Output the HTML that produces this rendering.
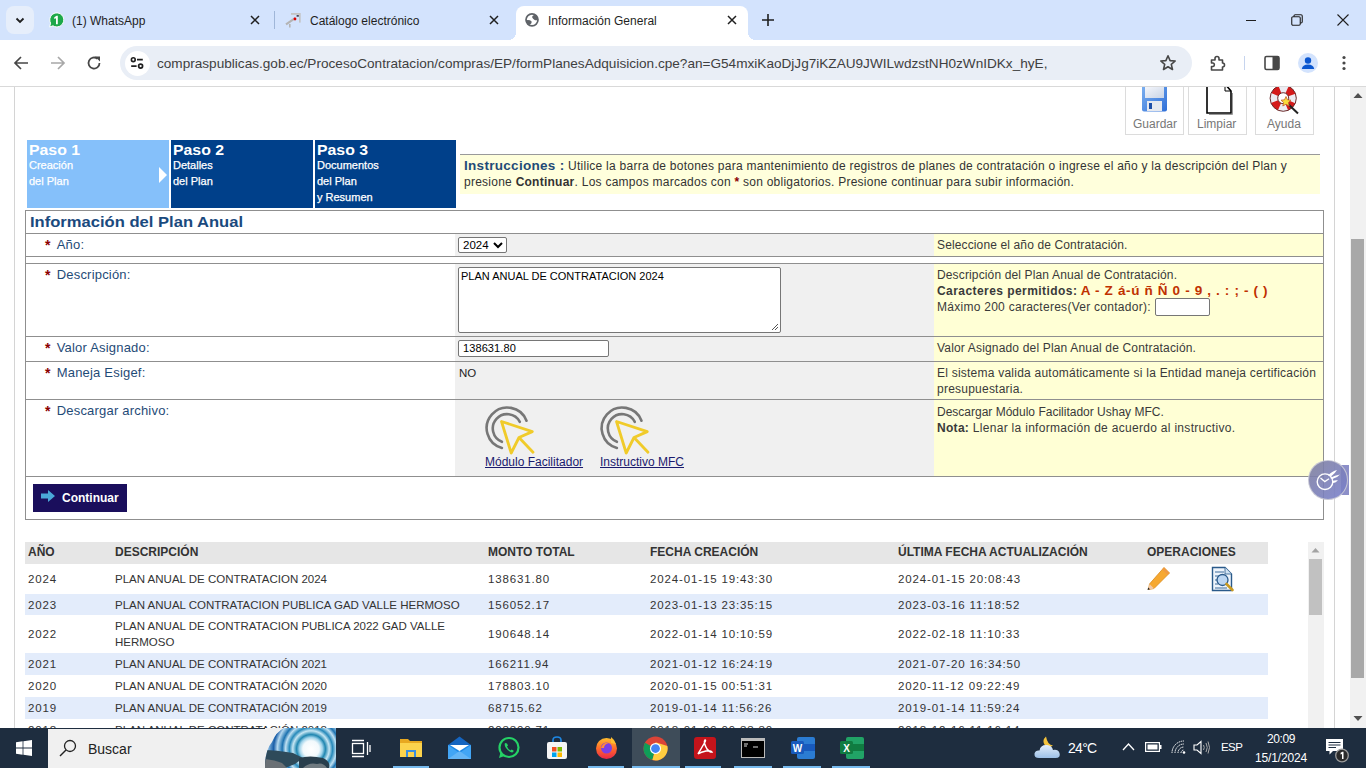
<!DOCTYPE html>
<html><head><meta charset="utf-8">
<style>
*{margin:0;padding:0;box-sizing:border-box}
html,body{width:1366px;height:768px;overflow:hidden;background:#fff;font-family:"Liberation Sans",sans-serif;position:relative}
.a{position:absolute}
.t{position:absolute;white-space:nowrap;line-height:1}
/* chrome */
#tabs{left:0;top:0;width:1366px;height:40px;background:#d3e3fd}
#toolbar{left:0;top:40px;width:1366px;height:46px;background:#fff;border-bottom:1px solid #d7d7d7}
#omni{left:120px;top:46px;width:1072px;height:34px;border-radius:17px;background:#e9eef6}
/* page */
#page{left:0;top:87px;width:1350px;height:641px;background:#fff;overflow:hidden}
.lbl{color:#1f4b77;font-size:13px;letter-spacing:0.2px}
.lbl .ast{position:absolute;left:0;top:0;font-weight:bold;font-size:14px}
.lbl i{font-style:normal;position:absolute;left:11.7px;top:0}
.ast{color:#8b0000}
.help{color:#3a3a3a;font-size:12px}
.th{font-size:12px;font-weight:bold;color:#333}
.td{font-size:11.5px;color:#333}
.num{letter-spacing:0.86px}
/* taskbar */
#taskbar{left:0;top:728px;width:1366px;height:40px;background:#1e2a38}
</style></head><body>
<!-- TAB STRIP -->
<div class="a" style="left:0;top:0;width:1366px;height:40px;background:#d3e3fd"></div>
<div class="a" style="left:6px;top:6px;width:28px;height:28px;border-radius:8px;background:#e6eefb"></div>
<svg class="a" style="left:13px;top:13px" width="14" height="14" viewBox="0 0 14 14"><path d="M3.5 5.5 L7 9 L10.5 5.5" fill="none" stroke="#1f1f1f" stroke-width="1.8"/></svg>
<!-- whatsapp tab -->
<svg class="a" style="left:48px;top:12px" width="16" height="16" viewBox="0 0 16 16"><path d="M1.6 15 L2.6 11.2 A7 7 0 1 1 5 13.8z" fill="#1ca84a" stroke="#fff" stroke-width="1"/><path d="M6.3 5.2 L8.6 3.8 H9.8 V12.2 H8 V6.2 L6.3 7.1z" fill="#fff"/></svg>
<div class="t" style="left:72px;top:15px;font-size:12px;color:#1f1f1f">(1) WhatsApp</div>
<svg class="a" style="left:250px;top:15px" width="10" height="10" viewBox="0 0 10 10"><path d="M1 1L9 9M9 1L1 9" stroke="#1f1f1f" stroke-width="1.5"/></svg>
<div class="a" style="left:274px;top:11px;width:1px;height:18px;background:#9fb6d8"></div>
<!-- catalogo tab -->
<svg class="a" style="left:284px;top:11px" width="18" height="18" viewBox="0 0 18 18"><rect x="7" y="2" width="8.6" height="1.8" fill="#c4c4c4"/><rect x="15" y="2" width="1.7" height="9.6" fill="#c4c4c4"/><path d="M2 13.3 L11.2 7.2" stroke="#b4b4b4" stroke-width="2.2"/><rect x="5" y="13" width="1.6" height="3.5" fill="#b4b4b4"/><circle cx="11" cy="8" r="1.4" fill="#d00"/><rect x="12.6" y="4.2" width="2.2" height="1.4" fill="#223"/></svg>
<div class="t" style="left:310px;top:15px;font-size:12px;color:#1f1f1f">Catálogo electrónico</div>
<svg class="a" style="left:489px;top:15px" width="10" height="10" viewBox="0 0 10 10"><path d="M1 1L9 9M9 1L1 9" stroke="#1f1f1f" stroke-width="1.5"/></svg>
<!-- active tab -->
<div class="a" style="left:516px;top:6px;width:232px;height:36px;background:#fff;border-radius:8px 8px 0 0"></div>
<div class="a" style="left:508px;top:32px;width:8px;height:8px;background:radial-gradient(circle at 0 0,#d3e3fd 8px,#fff 8px)"></div>
<div class="a" style="left:748px;top:32px;width:8px;height:8px;background:radial-gradient(circle at 8px 0,#d3e3fd 8px,#fff 8px)"></div>
<svg class="a" style="left:524px;top:12px" width="16" height="16" viewBox="0 0 16 16"><circle cx="8" cy="7.8" r="6" fill="#fff" stroke="#5f6368" stroke-width="1.7"/><path d="M8 5 Q8.5 3 11 2.8 Q13.8 4.5 13.6 8 Q11.5 8.8 10.3 7.8 Q9 7 8 5z" fill="#5f6368"/><path d="M1.8 8.3 Q4 7.8 6 8.3 Q8.5 9.5 7.5 11 Q6.5 12.5 5.5 13 Q2.5 11.5 1.8 8.3z" fill="#5f6368"/></svg>
<div class="t" style="left:548px;top:15px;font-size:12px;color:#1f1f1f">Información General</div>
<svg class="a" style="left:727px;top:15px" width="10" height="10" viewBox="0 0 10 10"><path d="M1 1L9 9M9 1L1 9" stroke="#1f1f1f" stroke-width="1.5"/></svg>
<svg class="a" style="left:761px;top:13px" width="14" height="14" viewBox="0 0 14 14"><path d="M7 1V13M1 7H13" stroke="#1f1f1f" stroke-width="1.6"/></svg>
<!-- window controls -->
<div class="a" style="left:1246px;top:20px;width:10px;height:1px;background:#1f1f1f"></div>
<svg class="a" style="left:1291px;top:14px" width="12" height="12" viewBox="0 0 12 12"><rect x="0.75" y="2.75" width="8.5" height="8.5" rx="1.2" fill="none" stroke="#1f1f1f" stroke-width="1.1"/><path d="M3 2.75 V2 Q3 0.75 4.2 0.75 H10 Q11.25 0.75 11.25 2 V7.8 Q11.25 9 10 9 H9.25" fill="none" stroke="#1f1f1f" stroke-width="1.1"/></svg>
<svg class="a" style="left:1337px;top:14px" width="12" height="12" viewBox="0 0 12 12"><path d="M0.5 0.5L11.5 11.5M11.5 0.5L0.5 11.5" stroke="#1f1f1f" stroke-width="1.1"/></svg>
<!-- TOOLBAR -->
<div class="a" style="left:0;top:40px;width:1366px;height:46px;background:#fff;border-radius:8px 8px 0 0"></div>
<div class="a" style="left:0;top:86px;width:1366px;height:1px;background:#d9d9d9"></div>
<svg class="a" style="left:13px;top:55px" width="16" height="16" viewBox="0 0 16 16"><path d="M15 8H2M8 2L2 8L8 14" fill="none" stroke="#474747" stroke-width="1.7"/></svg>
<svg class="a" style="left:50px;top:55px" width="16" height="16" viewBox="0 0 16 16"><path d="M1 8H14M8 2L14 8L8 14" fill="none" stroke="#a8a8a8" stroke-width="1.7"/></svg>
<svg class="a" style="left:86px;top:55px" width="16" height="16" viewBox="0 0 16 16"><path d="M13.5 8 A5.5 5.5 0 1 1 11.5 3.8" fill="none" stroke="#474747" stroke-width="1.8"/><path d="M9 1.5 H14 V6.5z" fill="#474747"/></svg>
<div class="a" style="left:120px;top:46px;width:1072px;height:34px;border-radius:17px;background:#e9eef6"></div>
<div class="a" style="left:125px;top:51px;width:25px;height:25px;border-radius:13px;background:#fff"></div>
<svg class="a" style="left:129px;top:55px" width="16" height="16" viewBox="0 0 16 16"><circle cx="4.3" cy="4.7" r="1.9" fill="none" stroke="#1f1f1f" stroke-width="1.6"/><path d="M8 4.7H13.8M2.2 11.1H7.6" stroke="#1f1f1f" stroke-width="1.7"/><circle cx="11.6" cy="11.1" r="2" fill="none" stroke="#1f1f1f" stroke-width="1.7"/></svg>
<div class="t" style="left:157px;top:57px;font-size:13.6px;color:#404040;letter-spacing:0px">compraspublicas.gob.ec/ProcesoContratacion/compras/EP/formPlanesAdquisicion.cpe?an=G54mxiKaoDjJg7iKZAU9JWILwdzstNH0zWnIDKx_hyE,</div>
<svg class="a" style="left:1159px;top:54px" width="18" height="18" viewBox="0 0 18 18"><path d="M9 1.8 L11.1 6.6 L16.2 7 L12.3 10.4 L13.5 15.5 L9 12.8 L4.5 15.5 L5.7 10.4 L1.8 7 L6.9 6.6z" fill="none" stroke="#474747" stroke-width="1.6" stroke-linejoin="round"/></svg>
<svg class="a" style="left:1209px;top:54px" width="18" height="18" viewBox="0 0 18 18"><path d="M2.5 6 H6 V4.5 A2 2 0 0 1 10 4.5 V6 H13.5 V9 A2 2 0 0 1 13.5 13 V16 H2.5 V12.5 H4 A1.8 1.8 0 0 0 4 9 H2.5z" fill="none" stroke="#474747" stroke-width="1.6" stroke-linejoin="round"/></svg>
<div class="a" style="left:1244px;top:56px;width:1px;height:14px;background:#c6d4ee"></div>
<svg class="a" style="left:1264px;top:55px" width="16" height="16" viewBox="0 0 16 16"><rect x="1" y="1.5" width="14" height="13" rx="1.5" fill="none" stroke="#474747" stroke-width="1.6"/><rect x="8.5" y="1.5" width="6.5" height="13" fill="#474747"/></svg>
<div class="a" style="left:1298px;top:53px;width:20px;height:20px;border-radius:10px;background:#d3e3fd"></div>
<svg class="a" style="left:1298px;top:53px" width="20" height="20" viewBox="0 0 20 20"><circle cx="10" cy="7.5" r="3.2" fill="#0b57d0"/><path d="M3.8 16 Q4.5 11.5 10 11.5 Q15.5 11.5 16.2 16z" fill="#0b57d0"/></svg>
<svg class="a" style="left:1342px;top:55px" width="4" height="16" viewBox="0 0 4 16"><circle cx="2" cy="2.5" r="1.6" fill="#474747"/><circle cx="2" cy="8" r="1.6" fill="#474747"/><circle cx="2" cy="13.5" r="1.6" fill="#474747"/></svg>
<div class="a" style="left:0;top:87px;width:1366px;height:641px;overflow:hidden"><div class="a" style="left:0;top:-87px;width:1366px;height:768px">
<!-- PAGE -->
<div class="a" style="left:14px;top:87px;width:1px;height:641px;background:#d4d4d4"></div>
<div class="a" style="left:1334px;top:87px;width:1px;height:641px;background:#d4d4d4"></div>
<!-- toolbar buttons -->
<div class="a" style="left:1125px;top:80px;width:59px;height:55px;border:1px solid #dcdcdc"></div>
<div class="a" style="left:1188px;top:80px;width:59px;height:55px;border:1px solid #dcdcdc"></div>
<div class="a" style="left:1255px;top:80px;width:59px;height:55px;border:1px solid #dcdcdc"></div>
<div class="t" style="left:1133px;top:118px;font-size:12px;color:#777">Guardar</div>
<div class="t" style="left:1197px;top:118px;font-size:12px;color:#777">Limpiar</div>
<div class="t" style="left:1267px;top:118px;font-size:12px;color:#777">Ayuda</div>
<!-- steps -->
<div class="a" style="left:27px;top:140px;width:142px;height:68px;background:#85c0fa"></div>
<div class="a" style="left:171px;top:140px;width:142px;height:68px;background:#00408a"></div>
<div class="a" style="left:315px;top:140px;width:141px;height:68px;background:#00408a"></div>
<svg class="a" style="left:158px;top:167px" width="10" height="16" viewBox="0 0 10 16"><path d="M1 0L9 8L1 16z" fill="#fff"/></svg>
<div class="t" style="left:29px;top:143px;font-size:14px;font-weight:bold;color:#fff;transform:scaleX(1.13);transform-origin:0 0">Paso 1</div>
<div class="t" style="left:29px;top:157px;font-size:11px;color:#fff;line-height:16px;white-space:normal;width:130px;-webkit-text-stroke:0.25px #fff">Creación<br>del Plan</div>
<div class="t" style="left:173px;top:143px;font-size:14px;font-weight:bold;color:#fff;transform:scaleX(1.13);transform-origin:0 0">Paso 2</div>
<div class="t" style="left:173px;top:157px;font-size:11px;color:#fff;line-height:16px;white-space:normal;width:130px;-webkit-text-stroke:0.25px #fff">Detalles<br>del Plan</div>
<div class="t" style="left:317px;top:143px;font-size:14px;font-weight:bold;color:#fff;transform:scaleX(1.13);transform-origin:0 0">Paso 3</div>
<div class="t" style="left:317px;top:157px;font-size:11px;color:#fff;line-height:16px;white-space:normal;width:130px;-webkit-text-stroke:0.25px #fff">Documentos<br>del Plan<br>y Resumen</div>
<!-- instructions -->
<div class="a" style="left:460px;top:154px;width:860px;height:40px;background:#ffffdc;border-top:1px solid #9a9a9a"></div>
<div class="t" style="left:464px;top:158px;font-size:12px;color:#333;line-height:16px;letter-spacing:0.25px">
<b style="color:#1f4b77;font-size:13.5px;letter-spacing:0.3px">Instrucciones :</b> Utilice la barra de botones para mantenimiento de registros de planes de contratación o ingrese el año y la descripción del Plan y<br>presione <b>Continuar</b>. Los campos marcados con <b style="color:#8b0000">*</b> son obligatorios. Presione continuar para subir información.</div>

<!-- FORM -->
<div class="a" style="left:25px;top:210px;width:1299px;height:310px;border:1px solid #8f8f8f"></div>
<div class="t" style="left:30px;top:215px;font-size:14.5px;font-weight:bold;color:#1a4a7e;transform:scaleX(1.143);transform-origin:0 0">Información del Plan Anual</div>
<div class="a" style="left:26px;top:233px;width:1297px;height:1px;background:#8f8f8f"></div>
<!-- row año -->
<div class="a" style="left:455px;top:234px;width:479px;height:22px;background:#f0f0f0"></div>
<div class="a" style="left:934px;top:234px;width:389px;height:22px;background:#ffffd5"></div>
<div class="a" style="left:26px;top:256px;width:1297px;height:1px;background:#8f8f8f"></div>
<div class="a" style="left:26px;top:263px;width:1297px;height:1px;background:#8f8f8f"></div>
<!-- row desc -->
<div class="a" style="left:455px;top:264px;width:479px;height:72px;background:#f0f0f0"></div>
<div class="a" style="left:934px;top:264px;width:389px;height:72px;background:#ffffd5"></div>
<div class="a" style="left:26px;top:336px;width:1297px;height:1px;background:#8f8f8f"></div>
<!-- row valor -->
<div class="a" style="left:455px;top:337px;width:479px;height:24px;background:#f0f0f0"></div>
<div class="a" style="left:934px;top:337px;width:389px;height:24px;background:#ffffd5"></div>
<div class="a" style="left:26px;top:361px;width:1297px;height:1px;background:#8f8f8f"></div>
<!-- row esigef -->
<div class="a" style="left:455px;top:362px;width:479px;height:37px;background:#f0f0f0"></div>
<div class="a" style="left:934px;top:362px;width:389px;height:37px;background:#ffffd5"></div>
<div class="a" style="left:26px;top:399px;width:1297px;height:1px;background:#8f8f8f"></div>
<!-- row descargar -->
<div class="a" style="left:455px;top:400px;width:479px;height:76px;background:#f0f0f0"></div>
<div class="a" style="left:934px;top:400px;width:389px;height:76px;background:#ffffd5"></div>
<div class="a" style="left:26px;top:476px;width:1297px;height:1px;background:#8f8f8f"></div>

<!-- labels -->
<div class="t lbl" style="left:45px;top:238px"><span class="ast">*</span><i>Año:</i></div>
<div class="t lbl" style="left:45px;top:268px"><span class="ast">*</span><i>Descripción:</i></div>
<div class="t lbl" style="left:45px;top:341px"><span class="ast">*</span><i>Valor Asignado:</i></div>
<div class="t lbl" style="left:45px;top:366px"><span class="ast">*</span><i>Maneja Esigef:</i></div>
<div class="t lbl" style="left:45px;top:404px"><span class="ast">*</span><i>Descargar archivo:</i></div>

<!-- controls -->
<div class="a" style="left:458px;top:237px;width:49px;height:16px;border:1px solid #767676;border-radius:2px;background:#fff"></div>
<div class="t" style="left:463px;top:240px;font-size:11.5px;color:#000">2024</div>
<svg class="a" style="left:493px;top:241px" width="10" height="8" viewBox="0 0 10 8"><path d="M1 2L5 6L9 2" fill="none" stroke="#000" stroke-width="2"/></svg>
<div class="a" style="left:458px;top:267px;width:323px;height:66px;border:1px solid #767676;border-radius:2px;background:#fff"></div>
<div class="t" style="left:461px;top:271px;font-size:11px;color:#000">PLAN ANUAL DE CONTRATACION 2024</div>
<svg class="a" style="left:770px;top:322px" width="9" height="9" viewBox="0 0 9 9"><path d="M8 2L2 8M8 5L5 8" stroke="#555" stroke-width="1"/></svg>
<div class="a" style="left:458px;top:340px;width:151px;height:17px;border:1px solid #767676;border-radius:2px;background:#fff"></div>
<div class="t" style="left:463px;top:343px;font-size:11px;color:#000;letter-spacing:0.1px">138631.80</div>
<div class="t" style="left:459px;top:368px;font-size:11.5px;color:#222">NO</div>

<!-- help texts -->
<div class="t help" style="left:937px;top:239px;letter-spacing:0.13px">Seleccione el año de Contratación.</div>
<div class="t help" style="left:937px;top:269px;letter-spacing:0.14px">Descripción del Plan Anual de Contratación.</div>
<div class="t help" style="left:937px;top:284px"><b style="letter-spacing:0.44px">Caracteres permitidos:</b> <b style="color:#c03000;letter-spacing:0.65px;font-size:13.5px">A - Z á-ú ñ Ñ 0 - 9 , . : ; - ( )</b></div>
<div class="t help" style="left:937px;top:301px;letter-spacing:0.27px">Máximo 200 caracteres(Ver contador):</div>
<div class="a" style="left:1155px;top:298px;width:55px;height:18px;border:1px solid #767676;border-radius:2px;background:#fff"></div>
<div class="t help" style="left:937px;top:342px;letter-spacing:0.17px">Valor Asignado del Plan Anual de Contratación.</div>
<div class="t help" style="left:937px;top:365px;line-height:16px;letter-spacing:0.23px">El sistema valida automáticamente si la Entidad maneja certificación<br>presupuestaria.</div>
<div class="t help" style="left:937px;top:404px;line-height:16px">Descargar Módulo Facilitador Ushay MFC.<br><span style="letter-spacing:0.3px"><b>Nota:</b> Llenar la información de acuerdo al instructivo.</span></div>

<!-- download icons -->
<svg class="a" style="left:480px;top:400px" width="60" height="60" viewBox="0 0 60 60"><path d="M21.9 48 A20.6 20.6 0 1 1 46.5 20.7" fill="none" stroke="#777" stroke-width="2.6" stroke-linecap="round"/><path d="M21.9 41.8 A14.3 14.3 0 1 1 39.8 21.9" fill="none" stroke="#777" stroke-width="2.6" stroke-linecap="round"/><path d="M21.5 21.5 L52.3 31.6 L39 37.5 L31.2 53 Z M39 37.5 L53 52.3" fill="none" stroke="#f0cb2a" stroke-width="2.8" stroke-linejoin="round" stroke-linecap="round"/></svg>
<svg class="a" style="left:595px;top:400px" width="60" height="60" viewBox="0 0 60 60"><path d="M21.9 48 A20.6 20.6 0 1 1 46.5 20.7" fill="none" stroke="#777" stroke-width="2.6" stroke-linecap="round"/><path d="M21.9 41.8 A14.3 14.3 0 1 1 39.8 21.9" fill="none" stroke="#777" stroke-width="2.6" stroke-linecap="round"/><path d="M21.5 21.5 L52.3 31.6 L39 37.5 L31.2 53 Z M39 37.5 L53 52.3" fill="none" stroke="#f0cb2a" stroke-width="2.8" stroke-linejoin="round" stroke-linecap="round"/></svg>
<div class="t" style="left:485px;top:456px;font-size:12px;color:#1a1a6e;text-decoration:underline">Módulo Facilitador</div>
<div class="t" style="left:600px;top:456px;font-size:12px;color:#1a1a6e;text-decoration:underline">Instructivo MFC</div>

<!-- continuar -->
<div class="a" style="left:33px;top:484px;width:94px;height:28px;background:#1a0e5c"></div>
<svg class="a" style="left:41px;top:490px" width="14" height="12" viewBox="0 0 14 12"><path d="M0 3.5H7V0L14 6L7 12V8.5H0z" fill="#4aa8d8"/></svg>
<div class="t" style="left:62px;top:492px;font-size:12px;font-weight:bold;color:#fff">Continuar</div>
<!-- TABLE -->
<div class="a" style="left:25px;top:542px;width:1243px;height:22px;background:#e6e6e6"></div>
<div class="a" style="left:25px;top:594px;width:1243px;height:21px;background:#e3ecfb"></div>
<div class="a" style="left:25px;top:653px;width:1243px;height:22px;background:#e3ecfb"></div>
<div class="a" style="left:25px;top:697px;width:1243px;height:22px;background:#e3ecfb"></div>
<div class="t th" style="left:28px;top:546px">AÑO</div>
<div class="t th" style="left:115px;top:546px">DESCRIPCIÓN</div>
<div class="t th" style="left:488px;top:546px">MONTO TOTAL</div>
<div class="t th" style="left:650px;top:546px">FECHA CREACIÓN</div>
<div class="t th" style="left:898px;top:546px">ÚLTIMA FECHA ACTUALIZACIÓN</div>
<div class="t th" style="left:1147px;top:546px">OPERACIONES</div>

<div class="t td num" style="left:28px;top:574px">2024</div>
<div class="t td" style="left:115px;top:574px">PLAN ANUAL DE CONTRATACION 2024</div>
<div class="t td num" style="left:488px;top:574px">138631.80</div>
<div class="t td num" style="left:650px;top:574px">2024-01-15 19:43:30</div>
<div class="t td num" style="left:898px;top:574px">2024-01-15 20:08:43</div>

<div class="t td num" style="left:28px;top:600px">2023</div>
<div class="t td" style="left:115px;top:600px">PLAN ANUAL CONTRATACION PUBLICA GAD VALLE HERMOSO</div>
<div class="t td num" style="left:488px;top:600px">156052.17</div>
<div class="t td num" style="left:650px;top:600px">2023-01-13 23:35:15</div>
<div class="t td num" style="left:898px;top:600px">2023-03-16 11:18:52</div>

<div class="t td num" style="left:28px;top:629px">2022</div>
<div class="t td" style="left:115px;top:618px;line-height:16px">PLAN ANUAL DE CONTRATACION PUBLICA 2022 GAD VALLE<br>HERMOSO</div>
<div class="t td num" style="left:488px;top:629px">190648.14</div>
<div class="t td num" style="left:650px;top:629px">2022-01-14 10:10:59</div>
<div class="t td num" style="left:898px;top:629px">2022-02-18 11:10:33</div>

<div class="t td num" style="left:28px;top:659px">2021</div>
<div class="t td" style="left:115px;top:659px">PLAN ANUAL DE CONTRATACIÓN 2021</div>
<div class="t td num" style="left:488px;top:659px">166211.94</div>
<div class="t td num" style="left:650px;top:659px">2021-01-12 16:24:19</div>
<div class="t td num" style="left:898px;top:659px">2021-07-20 16:34:50</div>

<div class="t td num" style="left:28px;top:681px">2020</div>
<div class="t td" style="left:115px;top:681px">PLAN ANUAL DE CONTRATACIÓN 2020</div>
<div class="t td num" style="left:488px;top:681px">178803.10</div>
<div class="t td num" style="left:650px;top:681px">2020-01-15 00:51:31</div>
<div class="t td num" style="left:898px;top:681px">2020-11-12 09:22:49</div>

<div class="t td num" style="left:28px;top:703px">2019</div>
<div class="t td" style="left:115px;top:703px">PLAN ANUAL DE CONTRATACIÓN 2019</div>
<div class="t td num" style="left:488px;top:703px">68715.62</div>
<div class="t td num" style="left:650px;top:703px">2019-01-14 11:56:26</div>
<div class="t td num" style="left:898px;top:703px">2019-01-14 11:59:24</div>

<div class="t td num" style="left:28px;top:725px">2018</div>
<div class="t td" style="left:115px;top:725px">PLAN ANUAL DE CONTRATACIÓN 2018</div>
<div class="t td num" style="left:488px;top:725px">203300.71</div>
<div class="t td num" style="left:650px;top:725px">2018-01-09 09:33:30</div>
<div class="t td num" style="left:898px;top:725px">2018-12-16 11:16:14</div>

<!-- inner scrollbar -->
<div class="a" style="left:1308px;top:542px;width:16px;height:186px;background:#f1f1f1"></div>
<svg class="a" style="left:1311px;top:547px" width="9" height="6" viewBox="0 0 9 6"><path d="M0.5 5.5L4.5 1L8.5 5.5z" fill="#a3a3a3"/></svg>
<div class="a" style="left:1309px;top:559px;width:13px;height:56px;background:#c1c1c1"></div>
<!-- browser scrollbar -->
<div class="a" style="left:1350px;top:87px;width:16px;height:641px;background:#f1f1f1"></div>
<svg class="a" style="left:1353px;top:92px" width="10" height="7" viewBox="0 0 10 7"><path d="M0.5 6L5 1L9.5 6z" fill="#505050"/></svg>
<svg class="a" style="left:1353px;top:715px" width="10" height="7" viewBox="0 0 10 7"><path d="M0.5 1L5 6L9.5 1z" fill="#505050"/></svg>
<div class="a" style="left:1351px;top:239px;width:13px;height:439px;background:#a8a8a8"></div>
<!-- floating button -->
<div class="a" style="left:1341px;top:465px;width:8px;height:30px;background:#8c8fc8"></div>
<div class="a" style="left:1308px;top:460px;width:40px;height:40px;border-radius:20px;background:linear-gradient(135deg,rgba(128,128,160,0.9),rgba(120,128,205,0.9));border:1.5px solid rgba(205,205,215,0.9)"></div>
<svg class="a" style="left:1314px;top:466px" width="30" height="30" viewBox="0 0 30 30"><circle cx="11" cy="15.7" r="7.8" fill="none" stroke="#fff" stroke-width="1.4"/><path d="M6.5 12 L10.8 15.6 L15 12.8" fill="none" stroke="#fff" stroke-width="1.3"/><path d="M14 9.5 Q18 5 23 4 Q21 7.5 17.5 10z M16 12 Q21 9 26 8.5 Q23 12 18.5 13z M18 15 Q22 14 24 14.5 Q21 17 19 17z" fill="#fff"/></svg>

<!-- top icons -->
<svg class="a" style="left:1141px;top:84px" width="27" height="28" viewBox="0 0 27 28"><defs><linearGradient id="fl" x1="0" y1="0" x2="1" y2="1"><stop offset="0" stop-color="#7fb2f0"/><stop offset="1" stop-color="#2f6fd8"/></linearGradient><linearGradient id="fw" x1="0" y1="0" x2="1" y2="1"><stop offset="0" stop-color="#f4f6fb"/><stop offset="1" stop-color="#c9d4e6"/></linearGradient></defs><rect x="1" y="0" width="25" height="27.5" rx="2" fill="url(#fl)"/><rect x="4" y="3" width="19" height="11" fill="url(#fw)"/><rect x="6" y="17" width="15" height="10" fill="#e6e9ef"/><rect x="8" y="19" width="3" height="6" fill="#1d4fa8"/></svg>
<svg class="a" style="left:1206px;top:84px" width="27" height="31" viewBox="0 0 27 31"><path d="M1 0H19L25 7V29H1z" fill="#fff" stroke="#000" stroke-width="1.6"/><path d="M19 0V7H25" fill="none" stroke="#000" stroke-width="1"/><path d="M3 30.5H26.5V9" fill="none" stroke="#999" stroke-width="1"/></svg>
<svg class="a" style="left:1268px;top:84px" width="34" height="32" viewBox="0 0 34 32"><circle cx="15.2" cy="14.2" r="9.3" fill="none" stroke="#ececf2" stroke-width="7.6"/><circle cx="15.2" cy="14.2" r="9.3" fill="none" stroke="#d51a1a" stroke-width="7.6" stroke-dasharray="7.3 7.3" stroke-dashoffset="10.9"/><circle cx="15.2" cy="14.2" r="13.1" fill="none" stroke="#6b2a2a" stroke-width="1"/><circle cx="15.2" cy="14.2" r="5.5" fill="none" stroke="#6b2a2a" stroke-width="1"/><path d="M19 19L30 29.5" stroke="#222" stroke-width="2"/><path d="M18 12.5L19.5 15.8L23 16.2L20.4 18.5L21.2 22L18 20.2L14.8 22L15.6 18.5L13 16.2L16.5 15.8z" fill="#f8dc3a" stroke="#c0602a" stroke-width="0.8"/></svg>
<!-- table ops icons -->
<svg class="a" style="left:1146px;top:566px" width="25" height="25" viewBox="0 0 25 25"><path d="M18 1.5L23.5 7L8 22.5L2.5 23.5L3.5 18z" fill="#f6a830" stroke="#d98a1a" stroke-width="0.8"/><path d="M18 1.5L23.5 7L21.5 9L16 3.5z" fill="#f09a40"/><path d="M3.5 18L8 22.5L2.5 23.5z" fill="#f3c9a8"/><path d="M2.2 21.5L4 23.2L1.5 24z" fill="#222"/></svg>
<svg class="a" style="left:1211px;top:566px" width="24" height="26" viewBox="0 0 24 26"><path d="M1.5 1.5H14L20.5 8V24.5H1.5z" fill="#eef4fb" stroke="#2a5a8a" stroke-width="1.4"/><path d="M14 1.5V8H20.5" fill="#d0e2f2" stroke="#2a5a8a" stroke-width="0.8"/><path d="M4 6H13M4 10H9M4 14H7M4 18H7M4 22H16" stroke="#3a6a9a" stroke-width="1"/><circle cx="11.5" cy="14" r="5.5" fill="#bcd6f2" stroke="#2a5a8a" stroke-width="1.3"/><path d="M15.5 18L21.5 24" stroke="#c99a20" stroke-width="2.6" stroke-linecap="round"/></svg>

</div></div>
<!-- TASKBAR -->
<div class="a" style="left:0;top:728px;width:1366px;height:40px;background:#1e2d3f"></div>
<svg class="a" style="left:16px;top:740px" width="16" height="16" viewBox="0 0 16 16"><path d="M0 2.2L6.6 1.3V7.6H0zM7.4 1.2L16 0V7.6H7.4zM0 8.4H6.6V14.7L0 13.8zM7.4 8.4H16V16L7.4 14.8z" fill="#fff"/></svg>
<div class="a" style="left:48px;top:729px;width:288px;height:39px;background:#f0f0f0"></div>
<svg class="a" style="left:59px;top:739px" width="18" height="18" viewBox="0 0 18 18"><circle cx="11" cy="7" r="5.5" fill="none" stroke="#222" stroke-width="1.3"/><path d="M7 11L1 17" stroke="#222" stroke-width="1.5"/></svg>
<div class="t" style="left:88px;top:742px;font-size:14px;color:#222">Buscar</div>
<!-- search decoration image -->
<svg class="a" style="left:265px;top:728px" width="71" height="40" viewBox="0 0 71 40"><defs><clipPath id="arch"><path d="M0 40 Q0 22 7 14 Q11 4 19 0 H71 V40z"/></clipPath><radialGradient id="glow" cx="46" cy="21" r="48" gradientUnits="userSpaceOnUse"><stop offset="0" stop-color="#ffffff"/><stop offset="0.17" stop-color="#f2f9fc"/><stop offset="0.24" stop-color="#9fd3ea"/><stop offset="0.3" stop-color="#1f86b0"/><stop offset="0.38" stop-color="#c6e6f3"/><stop offset="0.45" stop-color="#2689ba"/><stop offset="0.53" stop-color="#bfe0f2"/><stop offset="0.6" stop-color="#1c72b0"/><stop offset="0.7" stop-color="#b4d8ef"/><stop offset="0.78" stop-color="#1a5ea8"/><stop offset="0.9" stop-color="#8fc0e6"/><stop offset="1" stop-color="#1a4f96"/></radialGradient></defs><rect width="71" height="40" fill="#f0f0f0"/><g clip-path="url(#arch)"><rect width="71" height="40" fill="url(#glow)"/><path d="M0 40 V22 Q10 22 28 25 L38 30 L30 36 L20 40z" fill="#2e4a5a"/><path d="M0 40 V31 Q10 32 17 35 L22 40z" fill="#6a7075"/><path d="M34 30 Q45 27 58 30 Q66 34 64 40 H34z" fill="#283e4c"/><path d="M38 40 Q44 34 52 36 Q58 34 62 40z" fill="#6f7a80"/></g></svg>
<!-- task view -->
<svg class="a" style="left:351px;top:739px" width="20" height="19" viewBox="0 0 20 19"><rect x="1.5" y="4.5" width="11" height="10" fill="none" stroke="#fff" stroke-width="1.3"/><path d="M1 1.5H13M1 17.5H13M16.5 3V16M19 6V13" stroke="#fff" stroke-width="1.3"/></svg>
<!-- explorer -->
<svg class="a" style="left:399px;top:737px" width="24" height="22" viewBox="0 0 24 22"><path d="M1 2H9L11 4H23V20H1z" fill="#e8a820"/><rect x="1" y="6" width="22" height="14" fill="#fcd34d"/><rect x="7" y="13" width="10" height="7" fill="#3b8ee0"/><rect x="9" y="15" width="6" height="5" fill="#fcd34d"/></svg>
<!-- mail -->
<svg class="a" style="left:447px;top:736px" width="25" height="24" viewBox="0 0 25 24"><path d="M1 9L12.5 0.5L24 9V23H1z" fill="#1565c0"/><path d="M1 9H24V23H1z" fill="#1e88e5"/><path d="M3 9H22L12.5 15z" fill="#fff"/><path d="M1 9L12.5 17L24 9V23H1z" fill="#42a5f5"/><path d="M1 23L12.5 15L24 23z" fill="#64b5f6"/></svg>
<!-- whatsapp -->
<svg class="a" style="left:497px;top:736px" width="24" height="24" viewBox="0 0 24 24"><circle cx="12" cy="11.5" r="9.5" fill="none" stroke="#25d366" stroke-width="2.2"/><path d="M2 22L3.5 16.5L7.5 20z" fill="#25d366"/><path d="M8 7Q7 9 9 12Q12 16 15 16.5Q17 16 16.5 14.5L14.5 13.5L13.5 14.5Q11 13 10 10.5L11 9.5L10 7.5z" fill="#25d366"/></svg>
<!-- store -->
<svg class="a" style="left:545px;top:736px" width="24" height="24" viewBox="0 0 24 24"><path d="M8 6V4Q8 1 12 1Q16 1 16 4V6" fill="none" stroke="#1e88e5" stroke-width="1.6"/><rect x="2" y="6" width="20" height="17" rx="2" fill="#f5f5f5"/><rect x="7" y="11" width="4.5" height="4.5" fill="#f25022"/><rect x="12.5" y="11" width="4.5" height="4.5" fill="#7fba00"/><rect x="7" y="16.5" width="4.5" height="4.5" fill="#00a4ef"/><rect x="12.5" y="16.5" width="4.5" height="4.5" fill="#ffb900"/></svg>
<!-- firefox -->
<svg class="a" style="left:594px;top:735px" width="25" height="25" viewBox="0 0 25 25"><defs><linearGradient id="ffx" x1="0" y1="0" x2="0" y2="1"><stop offset="0" stop-color="#ffbd2e"/><stop offset="0.5" stop-color="#ff6a2a"/><stop offset="1" stop-color="#e8264a"/></linearGradient></defs><circle cx="12.5" cy="13.5" r="10.5" fill="url(#ffx)"/><path d="M17 2Q21 5 22 9L17 8z" fill="#ffbd2e"/><circle cx="12.5" cy="13" r="5.5" fill="#7b3fe4"/><path d="M7 13Q9 7 15 8Q10 9 10 13z" fill="#ff8a3a"/></svg>
<!-- chrome active -->
<div class="a" style="left:632px;top:728px;width:48px;height:40px;background:#3e4c59"></div>
<svg class="a" style="left:643px;top:736px" width="25" height="25" viewBox="0 0 24 24"><circle cx="12" cy="12" r="11.5" fill="#db4437"/><path d="M12 12L1.9 6.5A11.5 11.5 0 0 0 9 23.1z" fill="#0f9d58"/><path d="M12 12L9 23.1A11.5 11.5 0 0 0 23.4 9.5 L12 6z" fill="#ffcd40"/><circle cx="12" cy="12" r="5.3" fill="#fff"/><circle cx="12" cy="12" r="4.2" fill="#4285f4"/></svg>
<!-- acrobat -->
<svg class="a" style="left:694px;top:737px" width="22" height="22" viewBox="0 0 22 22"><rect x="0" y="0" width="22" height="22" rx="3" fill="#c4141b"/><path d="M4 17Q7 12 11 5Q12 3 11 3Q9 5 13 12Q15 15 18 15Q17 13 12 14Q7 15 4 17z" fill="none" stroke="#fff" stroke-width="1.5"/></svg>
<!-- cmd -->
<svg class="a" style="left:741px;top:738px" width="24" height="20" viewBox="0 0 24 20"><rect x="0" y="0" width="24" height="20" fill="#bbb"/><rect x="1" y="3" width="22" height="16" fill="#000"/><path d="M3 6H7M3 8H6M12 9H17" stroke="#ddd" stroke-width="1"/></svg>
<!-- word -->
<svg class="a" style="left:790px;top:736px" width="26" height="24" viewBox="0 0 26 24"><rect x="7" y="1" width="18" height="22" rx="2" fill="#2b7cd3"/><rect x="7" y="8" width="18" height="7" fill="#185abd"/><rect x="1" y="5" width="13" height="13" rx="1.5" fill="#185abd"/><text x="7.5" y="15.5" style="font-family:'Liberation Sans',sans-serif" font-weight="bold" font-size="10" fill="#fff" text-anchor="middle">W</text></svg>
<!-- excel -->
<svg class="a" style="left:839px;top:736px" width="26" height="24" viewBox="0 0 26 24"><rect x="7" y="1" width="18" height="22" rx="2" fill="#21a366"/><rect x="7" y="8" width="18" height="7" fill="#107c41"/><rect x="1" y="5" width="13" height="13" rx="1.5" fill="#107c41"/><text x="7.5" y="15.5" style="font-family:'Liberation Sans',sans-serif" font-weight="bold" font-size="10" fill="#fff" text-anchor="middle">X</text></svg>
<!-- indicators -->
<div class="a" style="left:393px;top:766px;width:36px;height:2px;background:#76b9ed"></div>
<div class="a" style="left:588px;top:766px;width:36px;height:2px;background:#76b9ed"></div>
<div class="a" style="left:632px;top:766px;width:48px;height:2px;background:#76b9ed"></div>
<div class="a" style="left:685px;top:766px;width:36px;height:2px;background:#76b9ed"></div>
<div class="a" style="left:734px;top:766px;width:38px;height:2px;background:#76b9ed"></div>
<div class="a" style="left:783px;top:766px;width:38px;height:2px;background:#76b9ed"></div>
<div class="a" style="left:832px;top:766px;width:38px;height:2px;background:#76b9ed"></div>
<!-- tray -->
<svg class="a" style="left:1033px;top:735px" width="30" height="26" viewBox="0 0 30 26"><path d="M13 1.5Q8.5 5.5 12 10.5Q15.5 13.5 20 10.5Q14.5 10 13 1.5z" fill="#f4c23b"/><defs><linearGradient id="cld" x1="0" y1="0" x2="0" y2="1"><stop offset="0" stop-color="#e4eefa"/><stop offset="1" stop-color="#9cc0e8"/></linearGradient></defs><path d="M6 23Q1 23 1.5 18.5Q2.5 15 6.5 15.5Q7.5 9.5 14 10Q19 10.5 20 15Q25 14 26.5 18Q28 23 22.5 23z" fill="url(#cld)"/></svg>
<div class="t" style="left:1068px;top:741px;font-size:14px;color:#fff;letter-spacing:-0.7px">24°C</div>
<svg class="a" style="left:1122px;top:742px" width="13" height="9" viewBox="0 0 13 9"><path d="M1 8L6.5 2L12 8" fill="none" stroke="#fff" stroke-width="1.3"/></svg>
<svg class="a" style="left:1145px;top:742px" width="17" height="10" viewBox="0 0 17 10"><rect x="0.6" y="0.6" width="13.8" height="8.8" fill="none" stroke="#fff" stroke-width="1.2"/><rect x="2.5" y="2.5" width="10" height="5" fill="#fff"/><rect x="15" y="3" width="1.5" height="4" fill="#fff"/></svg>
<svg class="a" style="left:1171px;top:740px" width="16" height="14" viewBox="0 0 16 14"><path d="M1 13A12 12 0 0 1 13 1M4 13A9 9 0 0 1 13 4M7 13A6 6 0 0 1 13 7M10 13A3 3 0 0 1 13 10" fill="none" stroke="#fff" stroke-width="1" stroke-dasharray="1.5 0.7"/><circle cx="13" cy="12.5" r="1.3" fill="#fff"/></svg>
<svg class="a" style="left:1193px;top:740px" width="17" height="15" viewBox="0 0 17 15"><path d="M1 5H4L8 1.5V13.5L4 10H1z" fill="none" stroke="#fff" stroke-width="1.1"/><path d="M10.5 5Q12 7.5 10.5 10M13 3Q15.5 7.5 13 12M15 1.5Q18 7.5 15 13.5" fill="none" stroke="#aaa" stroke-width="1"/></svg>
<div class="t" style="left:1221px;top:742px;font-size:11.5px;color:#fff;letter-spacing:-0.6px">ESP</div>
<div class="t" style="left:1267px;top:733px;font-size:12px;color:#fff;letter-spacing:-0.4px">20:09</div>
<div class="t" style="left:1255px;top:752px;font-size:12px;color:#fff;letter-spacing:-0.15px">15/1/2024</div>
<svg class="a" style="left:1324px;top:737px" width="26" height="26" viewBox="0 0 26 26"><path d="M2 2H19V14H9L5.5 17.5V14H2z" fill="#fff"/><path d="M4.5 5.5H16.5M4.5 8H16.5M4.5 10.5H12" stroke="#1e2d3f" stroke-width="1.1"/><circle cx="18" cy="18.5" r="6.3" fill="#2a2a2a" stroke="#9a9a9a" stroke-width="1.3"/><path d="M16.6 15.8 L18.4 14.8 H19.5 V22 H18 V16.9 L16.6 17.6z" fill="#fff"/></svg>

</body></html>
